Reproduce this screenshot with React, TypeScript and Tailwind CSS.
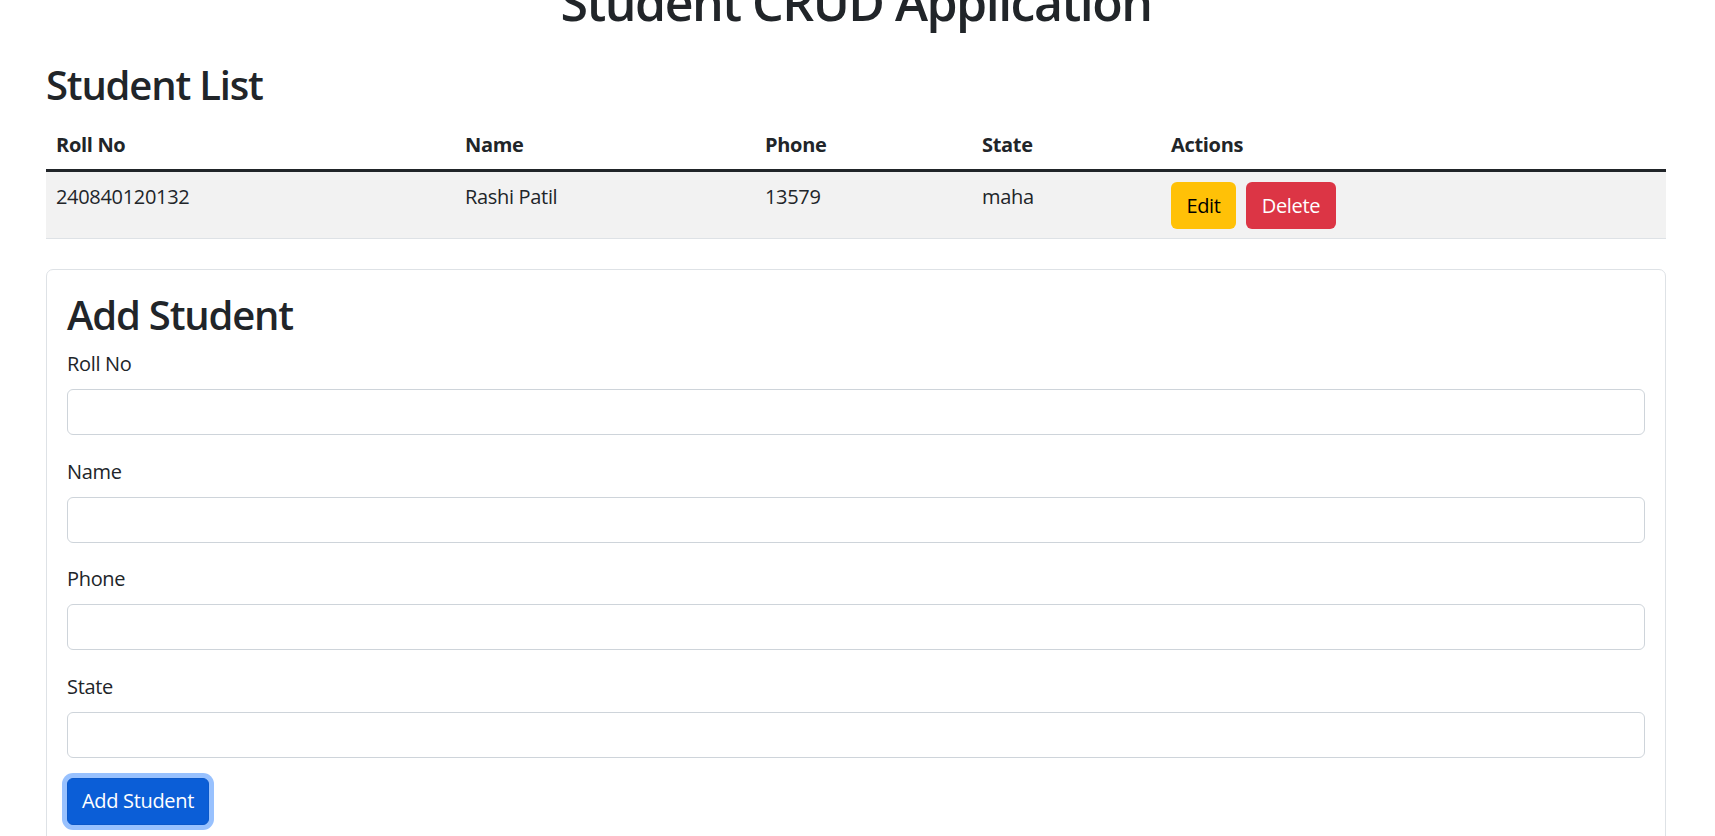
import React from "react";

const fields = ["Roll No", "Name", "Phone", "State"];

export default function App() {
  return (
    <div
      className="min-h-screen bg-white text-[#212529] overflow-hidden tracking-[-0.02em]"
      style={{ fontFamily: '"Open Sans", "Noto Sans", sans-serif' }}
    >
      <div className="ml-[46px] mr-[49px]">
        <h1 className="-mt-[28px] mb-[29px] text-center text-[50px] leading-[60px] font-semibold tracking-[-0.03em]">
          Student CRUD Application
        </h1>
        <h2 className="mb-[11px] text-[40px] leading-[48px] font-semibold tracking-[-0.03em]">Student List</h2>

        <div className="mb-[30px] text-[20px] leading-[30px]">
          <div className="grid grid-cols-[409px_300px_217px_189px_1fr] border-b-[3px] border-[#212529] font-bold">
            <div className="px-[10px] py-[9.5px]">Roll No</div>
            <div className="px-[10px] py-[9.5px]">Name</div>
            <div className="px-[10px] py-[9.5px]">Phone</div>
            <div className="px-[10px] py-[9.5px]">State</div>
            <div className="px-[10px] py-[9.5px]">Actions</div>
          </div>
          <div className="grid grid-cols-[409px_300px_217px_189px_1fr] bg-[#f2f2f2] border-b border-[#dee2e6]">
            <div className="px-[10px] py-[10px]">240840120132</div>
            <div className="px-[10px] py-[10px]">Rashi Patil</div>
            <div className="px-[10px] py-[10px]">13579</div>
            <div className="px-[10px] py-[10px]">maha</div>
            <div className="flex items-start gap-[10px] px-[10px] pt-[10px] pb-[9px]">
              <button className="h-[47px] w-[65px] rounded-[6px] bg-[#ffc107] text-[#000]">Edit</button>
              <button className="h-[47px] w-[90px] rounded-[6px] bg-[#dc3545] text-white">Delete</button>
            </div>
          </div>
        </div>

        <div className="rounded-[7px] border border-[#dee2e6] px-[20px] pt-[21px] pb-[20px]">
          <h2 className="mb-[10px] text-[40px] leading-[48px] font-semibold tracking-[-0.03em]">Add Student</h2>
          {fields.map((f) => (
            <div key={f} className="mb-[21.5px]">
              <label className="mb-[10px] block text-[20px] leading-[30px]">{f}</label>
              <input
                type="text"
                className="block h-[46px] w-full rounded-[6px] border border-[#ced4da] bg-white px-[15px] text-[20px] outline-none"
              />
            </div>
          ))}
          <button className="-mt-[1.5px] h-[47.5px] w-[142px] rounded-[6px] border border-[#0a58ca] bg-[#0b5ed7] text-[20px] text-white ring-[5px] ring-[#98c1fe]">
            Add Student
          </button>
        </div>
      </div>
    </div>
  );
}
